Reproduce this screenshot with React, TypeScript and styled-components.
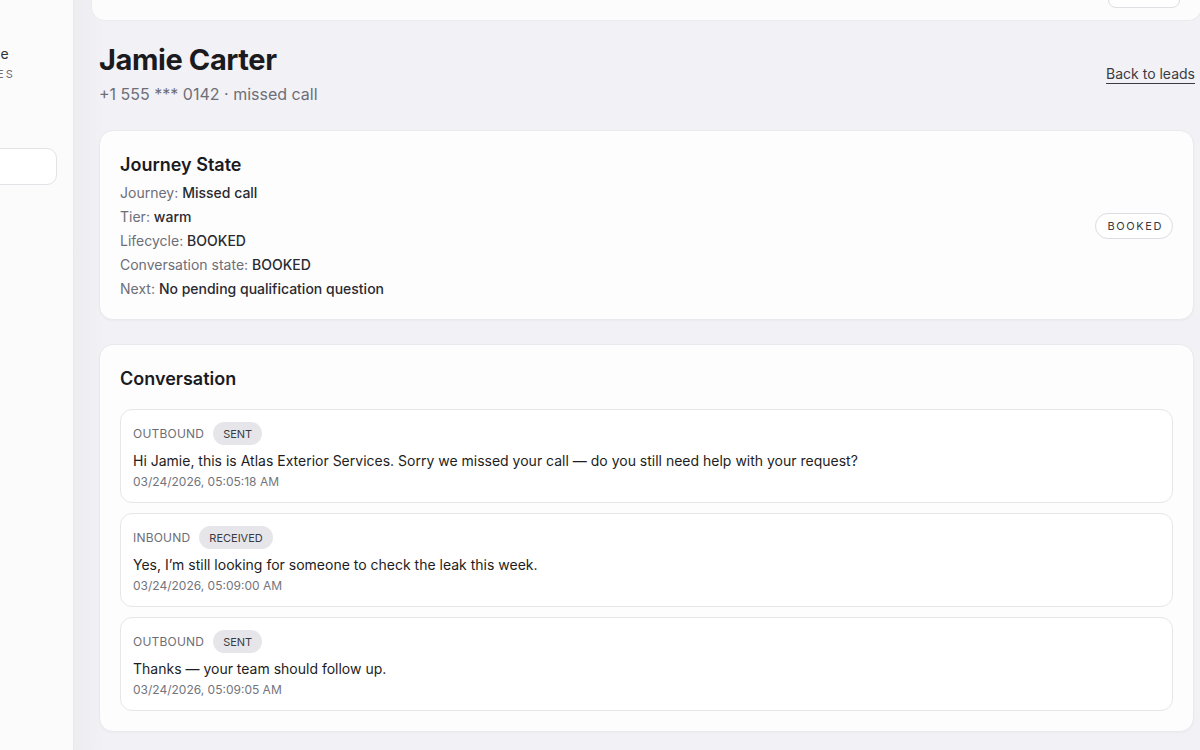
import React from "react";
import styled, { createGlobalStyle } from "styled-components";

const GlobalStyle = createGlobalStyle`
  html, body {
    margin: 0;
    padding: 0;
    height: 100%;
    overflow: hidden;
    background: #f2f2f6;
    font-family: Inter, "Noto Sans", "Liberation Sans", sans-serif;
    color: #1b1b20;
    -webkit-font-smoothing: antialiased;
  }
  * { box-sizing: border-box; }
`;

const Shell = styled.div`
  display: flex;
  height: 750px;
  width: 1366px;
  margin-left: -166px;
`;

const Sidebar = styled.aside`
  flex: 0 0 240px;
  background: #fbfbfc;
  border-right: 1px solid #e7e7ec;
  padding: 44px 16px 0 20px;
  display: flex;
  flex-direction: column;
`;

const Brand = styled.div`
  font-size: 14px;
  font-weight: 400;
  line-height: 20px;
  letter-spacing: 0.6px;
  color: #303036;
  white-space: nowrap;
`;

const BrandSub = styled.div`
  margin-top: 2px;
  font-size: 11px;
  line-height: 16px;
  letter-spacing: 2.2px;
  color: #6c6c75;
  text-transform: uppercase;
  white-space: nowrap;
`;

const SideSearch = styled.div`
  margin-top: 66px;
  height: 37px;
  border: 1px solid #e2e2e7;
  border-radius: 10px;
  background: #ffffff;
`;

const Main = styled.main`
  flex: 0 0 1126px;
  padding: 0 6px 0 25px;
  background: linear-gradient(90deg, #ececf1 0px, #f2f2f6 30px);
`;

const Scroller = styled.div`
  margin-top: -36px;
  display: flex;
  flex-direction: column;
`;

const TopBar = styled.div`
  margin: 0 -8px;
  padding: 12px 20px;
  background: #fcfcfd;
  border: 1px solid #ebebef;
  border-top: none;
  border-radius: 0 0 14px 14px;
  display: flex;
  align-items: center;
  justify-content: space-between;
`;

const TopText = styled.span`
  font-size: 14px;
  line-height: 20px;
  color: #55555d;
`;

const GhostButton = styled.button`
  height: 32px;
  width: 72px;
  margin-right: 1px;
  border: 1px solid #dedee3;
  border-radius: 8px;
  background: #ffffff;
  font-family: inherit;
  font-size: 13px;
  color: #3a3a42;
`;

const Header = styled.header`
  margin: 21px 0 1px;
  display: flex;
  align-items: center;
  justify-content: space-between;
`;

const Title = styled.h1`
  margin: 0;
  font-size: 29px;
  line-height: 36px;
  font-weight: 700;
  letter-spacing: -0.4px;
  color: #1a1a1f;
`;

const Subtitle = styled.div`
  margin-top: 5px;
  font-size: 16px;
  line-height: 22px;
  color: #6e6e77;
`;

const BackLink = styled.a`
  font-size: 14px;
  line-height: 20px;
  color: #3b3b44;
  text-decoration: underline;
  text-underline-offset: 4px;
  text-decoration-thickness: 1px;
  margin-right: -1px;
  cursor: pointer;
`;

const Card = styled.section<{ $row?: boolean }>`
  margin-top: 24px;
  padding: 20px 20px ${(p) => (p.$row ? "18px" : "20px")};
  background: #fdfdfe;
  border: 1px solid #e9e9ee;
  border-radius: 14px;
  box-shadow: 0 1px 2px rgba(20, 20, 40, 0.03);
  display: flex;
  flex-direction: ${(p) => (p.$row ? "row" : "column")};
  align-items: ${(p) => (p.$row ? "center" : "stretch")};
  justify-content: space-between;
`;

const CardTitle = styled.h2`
  margin: 0;
  font-size: 18px;
  line-height: 28px;
  font-weight: 600;
  color: #1a1a1f;
`;

const FactList = styled.div`
  margin-top: 2px;
  display: flex;
  flex-direction: column;
`;

const Fact = styled.div`
  font-size: 14px;
  line-height: 24px;
  color: #6e6e77;

  b {
    font-weight: 500;
    color: #2a2a30;
  }
`;

const StatusPill = styled.span`
  height: 26px;
  padding: 0 9px 0 11px;
  display: inline-flex;
  align-items: center;
  border: 1px solid #dcdce2;
  border-radius: 999px;
  background: #ffffff;
  font-size: 11px;
  letter-spacing: 1.6px;
  color: #3a3a42;
`;

const Thread = styled.div`
  margin-top: 16px;
  display: flex;
  flex-direction: column;
  gap: 10px;
`;

const Message = styled.article`
  padding: 12px 12px 11px;
  background: #ffffff;
  border: 1px solid #e6e6eb;
  border-radius: 12px;
  display: flex;
  flex-direction: column;
`;

const MetaRow = styled.div`
  display: flex;
  align-items: center;
  gap: 9px;
  height: 23px;
`;

const Direction = styled.span`
  font-size: 12px;
  color: #6e6e77;
  letter-spacing: 0.2px;
`;

const DeliveryBadge = styled.span`
  height: 23px;
  padding: 0 10px;
  display: inline-flex;
  align-items: center;
  border-radius: 999px;
  background: #e6e6ea;
  font-size: 11px;
  color: #3a3a42;
`;

const Body = styled.p`
  margin: 6px 0 0;
  font-size: 14px;
  line-height: 20px;
  color: #1d1d22;
`;

const Stamp = styled.time`
  margin-top: 2px;
  font-size: 12px;
  line-height: 18px;
  color: #74747c;
`;

type Msg = {
  direction: string;
  status: string;
  text: string;
  at: string;
};

const messages: Msg[] = [
  {
    direction: "OUTBOUND",
    status: "SENT",
    text: "Hi Jamie, this is Atlas Exterior Services. Sorry we missed your call \u2014 do you still need help with your request?",
    at: "03/24/2026, 05:05:18 AM",
  },
  {
    direction: "INBOUND",
    status: "RECEIVED",
    text: "Yes, I\u2019m still looking for someone to check the leak this week.",
    at: "03/24/2026, 05:09:00 AM",
  },
  {
    direction: "OUTBOUND",
    status: "SENT",
    text: "Thanks \u2014 your team should follow up.",
    at: "03/24/2026, 05:09:05 AM",
  },
];

const facts: [string, string][] = [
  ["Journey", "Missed call"],
  ["Tier", "warm"],
  ["Lifecycle", "BOOKED"],
  ["Conversation state", "BOOKED"],
  ["Next", "No pending qualification question"],
];

export default function App() {
  return (
    <>
      <GlobalStyle />
      <Shell>
        <Sidebar>
          <Brand>Atlas Exterior Service</Brand>
          <BrandSub>Outreach Messages</BrandSub>
          <SideSearch />
        </Sidebar>
        <Main>
          <Scroller>
            <TopBar>
              <TopText>Viewing lead profile</TopText>
              <GhostButton>Sign out</GhostButton>
            </TopBar>

            <Header>
              <div>
                <Title>Jamie Carter</Title>
                <Subtitle>+1 555 *** 0142 · missed call</Subtitle>
              </div>
              <BackLink>Back to leads</BackLink>
            </Header>

            <Card $row>
              <div>
                <CardTitle>Journey State</CardTitle>
                <FactList>
                  {facts.map(([k, v]) => (
                    <Fact key={k}>
                      {k}: <b>{v}</b>
                    </Fact>
                  ))}
                </FactList>
              </div>
              <StatusPill>BOOKED</StatusPill>
            </Card>

            <Card>
              <CardTitle>Conversation</CardTitle>
              <Thread>
                {messages.map((m, i) => (
                  <Message key={i}>
                    <MetaRow>
                      <Direction>{m.direction}</Direction>
                      <DeliveryBadge>{m.status}</DeliveryBadge>
                    </MetaRow>
                    <Body>{m.text}</Body>
                    <Stamp>{m.at}</Stamp>
                  </Message>
                ))}
              </Thread>
            </Card>
          </Scroller>
        </Main>
      </Shell>
    </>
  );
}
